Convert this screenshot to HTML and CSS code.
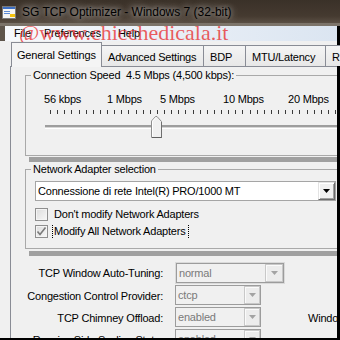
FILE: index.html
```html
<!DOCTYPE html>
<html>
<head>
<meta charset="utf-8">
<link rel="stylesheet" href="styles.css">
</head>
<body>
<div class="win">
  <div class="title">
    <svg class="appicon" width="14" height="13" viewBox="0 0 14 13">
      <rect x="0.5" y="0.5" width="13" height="12" fill="#f4f4f4" stroke="#7a7a7a"/>
      <rect x="1" y="1" width="12" height="2" fill="#3d6fc4"/>
      <rect x="2" y="5" width="6" height="1" fill="#5a8ad6"/>
      <rect x="2" y="7" width="6" height="1" fill="#5a8ad6"/>
      <rect x="8" y="8" width="5" height="3" fill="#f2c20f"/>
    </svg>
    <span class="title-text">SG TCP Optimizer - Windows 7 (32-bit)</span>
  </div>
  <div class="strip"></div>
  <div class="menurow">
    <div class="menubar">
      <span class="mi mi-file">File</span>
      <span class="mi mi-pref">Preferences</span>
      <span class="mi mi-help">Help</span>
    </div>
  </div>
  <div class="client">
    <div class="tabs">
      <div class="tab sel t-gen">General Settings</div>
      <div class="tab t-adv">Advanced Settings</div>
      <div class="tab t-bdp">BDP</div>
      <div class="tab t-mtu">MTU/Latency</div>
      <div class="tab t-r">R</div>
    </div>
    <div class="pane">
      <fieldset class="grp g1">
        <legend>Connection Speed&nbsp; 4.5 Mbps (4,500 kbps):</legend>
        <div class="scale">
          <span class="sl s1">56 kbps</span>
          <span class="sl s2">1 Mbps</span>
          <span class="sl s3">5 Mbps</span>
          <span class="sl s4">10 Mbps</span>
          <span class="sl s5">20 Mbps</span>
        </div>
        <svg class="slider" width="330" height="34" viewBox="26 106 330 34">
          <g fill="#3a3a3a" id="ticks"></g>
          <rect x="45" y="125" width="300" height="2" fill="#9d9d9d"/>
          <rect x="45" y="127" width="300" height="1" fill="#d6d6d6"/>
          <rect x="45" y="128" width="300" height="1" fill="#ffffff"/>
          <polygon points="151.5,137.5 151.5,121 155.5,116.5 157,116.5 161.5,121.5 161.5,137.5" fill="#f0f0f0" stroke="#8e8e8e"/>
          <polyline points="152.5,136.5 152.5,121.3 155.8,117.6" fill="none" stroke="#ffffff"/>
          <polyline points="152,137.5 162,137.5" fill="none" stroke="#5f5f5f"/>
          <polyline points="161.5,122 161.5,138" fill="none" stroke="#6f6f6f"/>
        </svg>
      </fieldset>
      <div class="sep"></div>
      <fieldset class="grp g2">
        <legend>Network Adapter selection</legend>
        <div class="select">
          <span class="sel-text">Connessione di rete Intel(R) PRO/1000 MT</span>
          <span class="ddbtn"><svg width="7" height="4" viewBox="0 0 7 4"><polygon points="0,0 7,0 3.5,4" fill="#000"/></svg></span>
        </div>
        <div class="chk c1"><span class="box"></span><span class="chk-l">Don't modify Network Adapters</span></div>
        <div class="chk c2"><span class="box"><svg width="11" height="11" viewBox="0 0 11 11"><polyline points="1.5,5.5 4,8.5 9.5,1.5" fill="none" stroke="#7a7a7a" stroke-width="1.6"/></svg></span><span class="chk-l focus">Modify All Network Adapters</span></div>
      </fieldset>
      <div class="sep sep2"></div>
      <div class="form">
        <span class="fl">TCP Window Auto-Tuning:</span>
        <div class="cbwrap"><div class="cb cb-wide"><span class="cbt">normal</span><span class="cbb b-wide"><svg width="7" height="4" viewBox="0 0 7 4"><polygon points="0,0 7,0 3.5,4" fill="#a3a3a3"/></svg></span></div></div>
        <span></span>
        <span class="fl">Congestion Control Provider:</span>
        <div class="cb"><span class="cbt">ctcp</span><span class="cbb"><svg width="7" height="4" viewBox="0 0 7 4"><polygon points="0,0 7,0 3.5,4" fill="#a3a3a3"/></svg></span></div>
        <span></span>
        <span class="fl">TCP Chimney Offload:</span>
        <div class="cb"><span class="cbt">enabled</span><span class="cbb"><svg width="7" height="4" viewBox="0 0 7 4"><polygon points="0,0 7,0 3.5,4" fill="#a3a3a3"/></svg></span></div>
        <span class="fr">Windows Scaling heuristics:</span>
        <span class="fl">Receive Side Scaling State:</span>
        <div class="cb"><span class="cbt">enabled</span><span class="cbb"><svg width="7" height="4" viewBox="0 0 7 4"><polygon points="0,0 7,0 3.5,4" fill="#a3a3a3"/></svg></span></div>
        <span></span>
      </div>
    </div>
  </div>
  <div class="watermark">@www.chicchedicala.it</div>
</div>
<script>
  var g = document.getElementById('ticks');
  var s = '';
  for (var i = 0; i <= 40; i++) {
    var x = Math.round(50 + i * 7.125);
    s += '<rect x="' + x + '" y="110" width="1" height="4"/>';
  }
  g.innerHTML = s;
</script>
</body>
</html>
```

FILE: styles.css
```css
html, body {
  margin: 0;
  padding: 0;
}
body {
  width: 340px;
  height: 340px;
  overflow: hidden;
  background: #000;
  font-family: "Liberation Sans", Arial, sans-serif;
  font-size: 11px;
  letter-spacing: -0.2px;
  color: #000;
}
.win {
  position: relative;
  width: 340px;
  height: 340px;
  overflow: hidden;
  display: flex;
  flex-direction: column;
}
.title {
  height: 23px;
  flex: none;
  display: flex;
  align-items: center;
  background: linear-gradient(#3a3128, #453a30 70%, #5a4f44);
}
.appicon {
  margin-left: 2px;
  margin-top: 1px;
}
.title-text {
  margin-left: 6px;
  font-size: 12px;
  letter-spacing: 0;
  text-shadow: 0 0 5px rgba(255,255,255,0.55), 0 0 10px rgba(255,255,255,0.45), 0 0 14px rgba(255,255,255,0.35);
}
.strip {
  height: 3px;
  flex: none;
  background: #7c746a;
}
.menurow {
  height: 15px;
  flex: none;
  display: flex;
  background: #5e554b;
  padding-left: 5px;
  border-right: 3px solid #000;
}
.menubar {
  flex: 1;
  display: flex;
  align-items: center;
  background: linear-gradient(to right, #f7f9fc, #dbe5f1);
}
.mi { line-height: 15px; }
.mi-file { margin-left: 9px; }
.mi-pref { margin-left: 13px; }
.mi-help { margin-left: 17px; }

.client {
  flex: 1;
  min-height: 0;
  background: #f0f0f0;
  border-right: 3px solid #000;
  border-bottom: 2px solid #000;
  padding-top: 1px;
  display: flex;
  flex-direction: column;
}
.tabs {
  height: 24px;
  flex: none;
  display: flex;
  align-items: flex-end;
  padding-left: 11px;
}
.tab {
  box-sizing: border-box;
  height: 21px;
  border: 1px solid #898c95;
  border-bottom: none;
  margin-left: -1px;
  padding: 5px 0 0 6px;
  line-height: 13px;
  background: linear-gradient(#f5f5f5, #e7e7e7);
  white-space: nowrap;
  overflow: hidden;
  flex: none;
}
.tab.sel {
  height: 25px;
  margin-left: 0;
  margin-bottom: -1px;
  position: relative;
  z-index: 1;
  background: #f4f4f4;
  padding: 6px 0 0 5px;
}
.t-gen { width: 91px; }
.t-adv { width: 103px; }
.t-bdp { width: 43px; }
.t-mtu { width: 81px; }
.t-r { width: 40px; }

.pane {
  flex: 1;
  margin-left: 10px;
  border-left: 1px solid #898c95;
  border-top: 1px solid #898c95;
  padding: 1px 0 0 14px;
  overflow: hidden;
}
.grp {
  box-sizing: border-box;
  margin: 0;
  padding: 0;
  width: 340px;
  min-width: 0;
  border: 1px solid #a9a9a9;
}
.grp legend {
  margin-left: 5px;
  padding: 0 2px;
  line-height: 14px;
  height: 14px;
}
.g1 { height: 88px; }
.scale {
  display: flex;
  margin: 10px 0 0 18px;
  height: 14px;
  line-height: 14px;
  white-space: nowrap;
}
.sl { flex: none; }
.s1 { width: 63px; }
.s2 { width: 53px; }
.s3 { width: 63px; }
.s4 { width: 65px; }
.slider { display: block; }

.sep {
  height: 5px;
  margin: 1px 0 0 4px;
  background: #a0a0a0;
}
.sep2 { margin-top: 2px; }

.g2 { height: 87px; }
.select {
  box-sizing: border-box;
  margin: 5px 0 0 9px;
  width: 301px;
  height: 20px;
  border: 1px solid #a5a5a5;
  background: #fff;
  display: flex;
  align-items: center;
  padding-left: 2px;
}
.sel-text {
  flex: 1;
  white-space: nowrap;
}
.ddbtn {
  box-sizing: border-box;
  width: 17px;
  height: 18px;
  background: #f0f0f0;
  border-top: 1px solid #e3e3e3;
  border-left: 1px solid #e3e3e3;
  border-right: 1px solid #6a6a6a;
  border-bottom: 1px solid #6a6a6a;
  box-shadow: inset 1px 1px 0 #fff, inset -1px -1px 0 #a0a0a0;
  display: flex;
  align-items: center;
  justify-content: center;
}
.chk {
  display: flex;
  align-items: center;
  margin-left: 9px;
  height: 13px;
}
.c1 { margin-top: 7px; }
.c2 { margin-top: 4px; }
.box {
  box-sizing: border-box;
  width: 13px;
  height: 13px;
  border: 1px solid #8f8f8f;
  background: linear-gradient(135deg, #dcdcdc, #f7f7f7);
  box-shadow: inset 0 0 0 1px #f4f4f4;
  display: flex;
  align-items: center;
  justify-content: center;
  flex: none;
}
.chk-l {
  margin-left: 5px;
  line-height: 13px;
  padding: 0 2px 0 1px;
}
.focus {
  margin-left: 4px;
  border-left: 1px dotted #000;
  border-right: 1px dotted #000;
}

.form {
  margin-top: 6px;
  display: grid;
  grid-template-columns: 138px 110px auto;
  grid-template-rows: 22px 21px 21px 21px;
  column-gap: 12px;
  row-gap: 1px;
  white-space: nowrap;
}
.fl {
  text-align: right;
  align-self: center;
  line-height: 14px;
}
.fr {
  align-self: center;
  margin-left: 11px;
  line-height: 14px;
}
.cbwrap {
  box-sizing: border-box;
  border: 1px solid #dadada;
  height: 22px;
  width: 110px;
}
.cb {
  box-sizing: border-box;
  width: 86px;
  height: 20px;
  border: 1px solid #9c9c9c;
  background: #f0f0f0;
  color: #7a7a7a;
  display: flex;
  align-items: center;
  padding-left: 2px;
  align-self: start;
}
.cb-wide {
  width: 108px;
  height: 20px;
}
.cbt {
  flex: 1;
}
.cbb {
  box-sizing: border-box;
  width: 16px;
  height: 18px;
  border: 1px solid #c8c8c8;
  background: #ececec;
  box-shadow: inset 1px 1px 0 #fafafa;
  display: flex;
  align-items: center;
  justify-content: center;
}
.b-wide { width: 18px; }

.watermark {
  position: absolute;
  left: 19px;
  top: 20px;
  font-family: "Liberation Serif", "Times New Roman", serif;
  font-size: 22px;
  line-height: 25px;
  letter-spacing: 0;
  color: rgba(232, 34, 34, 0.72);
  pointer-events: none;
  white-space: nowrap;
}
```
